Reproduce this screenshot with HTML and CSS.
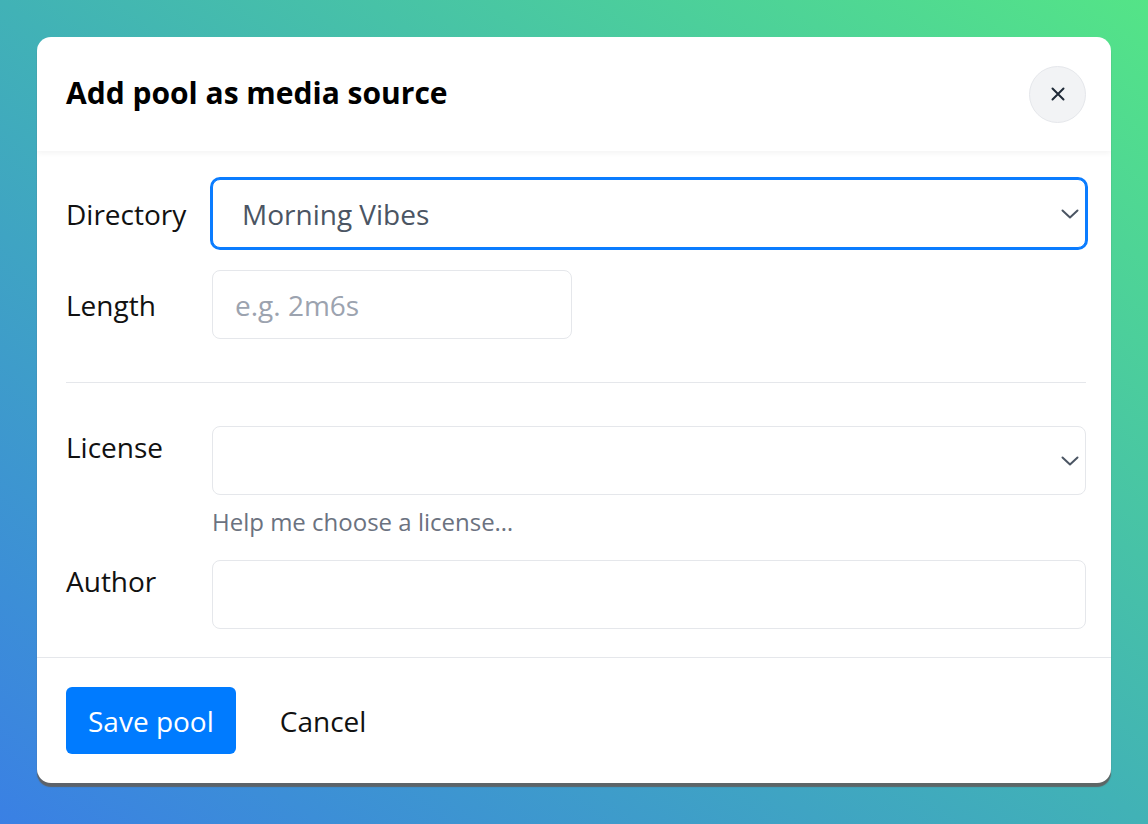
FILE: index.html
```html
<!DOCTYPE html>
<html lang="en">
<head>
    <meta charset="UTF-8">
    <meta name="viewport" content="width=device-width, initial-scale=1.0">
    <title>Add pool</title>
    <link rel="stylesheet" href="styles.css">
</head>
<body>

    <div class="modal">
        <div class="modal-header">
            <h2>Add pool as media source</h2>
            <button class="close-btn" type="button" aria-label="Close">
                <svg width="16" height="16" viewBox="0 0 16 16" fill="none" stroke="#1f2937" stroke-width="2" stroke-linecap="round">
                    <path d="M2.5 2.5 L13.5 13.5 M13.5 2.5 L2.5 13.5"/>
                </svg>
            </button>
        </div>

        <form class="modal-body">
            <div class="row center">
                <label for="directory">Directory</label>
                <div class="select focused">
                    <span class="value">Morning Vibes</span>
                    <svg class="chevron" width="18" height="10" viewBox="0 0 18 10" fill="none" stroke="#4b5563" stroke-width="2" stroke-linecap="round" stroke-linejoin="round">
                        <path d="M1.5 1.5 L9 8.5 L16.5 1.5"/>
                    </svg>
                </div>
            </div>

            <div class="row center">
                <label for="length">Length</label>
                <input type="text" id="length" class="short" placeholder="e.g. 2m6s">
            </div>

            <hr class="divider">

            <div class="row">
                <label>License</label>
                <div>
                    <div class="select">
                        <span class="value"></span>
                        <svg class="chevron" width="18" height="10" viewBox="0 0 18 10" fill="none" stroke="#4b5563" stroke-width="2" stroke-linecap="round" stroke-linejoin="round">
                            <path d="M1.5 1.5 L9 8.5 L16.5 1.5"/>
                        </svg>
                    </div>
                    <p class="help">Help me choose a license…</p>
                </div>
            </div>

            <div class="row">
                <label for="author">Author</label>
                <input type="text" id="author">
            </div>
        </form>

        <div class="modal-footer">
            <button class="btn-primary" type="button">Save pool</button>
            <button class="btn-link" type="button">Cancel</button>
        </div>
    </div>

</body>
</html>
```

FILE: styles.css
```css
/* Page */
body {
    font-family: 'Open Sans', 'Noto Sans', sans-serif;
    background: linear-gradient(to top right, #3a80e4 0%, #41b2b6 50%, #54e487 100%);
    margin: 0;
    padding: 37px;
    height: 824px;
    box-sizing: border-box;
    color: #111;
}

/* Modal card */
.modal {
    background: #ffffff;
    border-radius: 14px;
    box-shadow: 0 4px 1px rgba(95, 95, 95, 0.92);
    overflow: hidden;
}

.modal-header {
    height: 114px;
    padding: 0 25px 0 29px;
    display: flex;
    align-items: center;
    justify-content: space-between;
    position: relative;
    box-shadow: 0 2px 6px rgba(0, 0, 0, 0.05);
    z-index: 1;
}

.modal-header h2 {
    margin: 0 0 3px;
    font-size: 30px;
    font-weight: 700;
    color: #000;
}

.close-btn {
    width: 57px;
    height: 57px;
    border-radius: 50%;
    border: 1px solid #e5e7eb;
    background: #f2f3f5;
    display: flex;
    align-items: center;
    justify-content: center;
    padding: 0;
}

/* Form body */
.modal-body {
    padding: 28px 25px 28px 29px;
    display: flex;
    flex-direction: column;
    gap: 22px;
}

.row {
    display: grid;
    grid-template-columns: 146px 1fr;
    align-items: start;
}

.row.center {
    align-items: center;
}

.row label {
    font-size: 28px;
    line-height: 42px;
    color: #111;
}

.select, .row input {
    box-sizing: border-box;
    height: 69px;
    border: 1px solid #e5e7eb;
    border-radius: 8px;
    background: #fff;
    font-family: inherit;
    font-size: 28px;
}

.select {
    display: flex;
    align-items: center;
    justify-content: space-between;
    padding: 0 6px 0 29px;
    color: #4b5563;
}

.select.focused {
    border-color: #0a7cff;
    box-shadow: 0 0 0 2px #0a7cff;
}

.row input {
    width: 100%;
    padding: 0 22px;
    outline: none;
}

.row input.short {
    width: 360px;
}

.row input::placeholder {
    color: #9ca3af;
}

.divider {
    border: none;
    border-top: 1px solid #e5e7eb;
    margin: 21px 0;
}

.help {
    margin: 10px 0 0;
    font-size: 24px;
    line-height: 33px;
    color: #6b7280;
}

/* Footer */
.modal-footer {
    border-top: 1px solid #e5e7eb;
    padding: 29px 29px 29px;
    display: flex;
    align-items: center;
    gap: 22px;
}

.btn-primary {
    height: 67px;
    padding: 0 22px;
    background: #007bff;
    color: #fff;
    border: none;
    border-radius: 6px;
    font-family: inherit;
    font-size: 28px;
}

.btn-link {
    background: none;
    border: none;
    padding: 0 22px;
    font-family: inherit;
    font-size: 28px;
    color: #111;
}
```
